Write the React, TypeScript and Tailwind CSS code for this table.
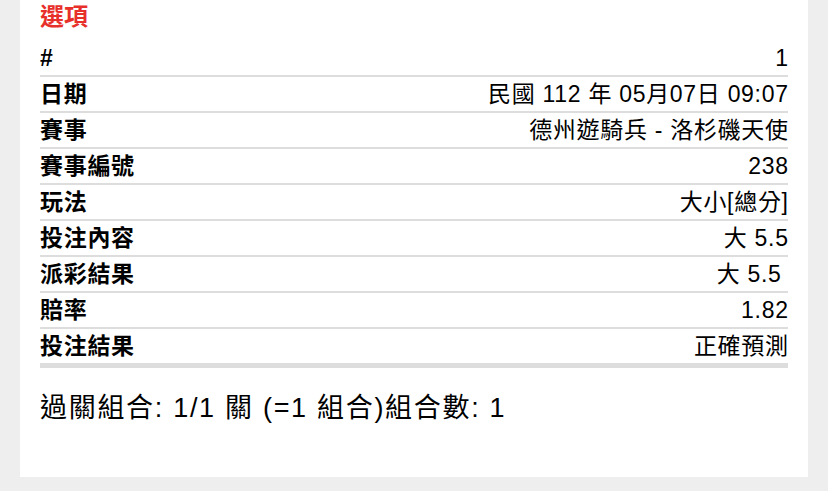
const rows: { label: string; value: string }[] = [
  { label: "#", value: "1" },
  { label: "日期", value: "民國 112 年 05月07日 09:07" },
  { label: "賽事", value: "德州遊騎兵 - 洛杉磯天使" },
  { label: "賽事編號", value: "238" },
  { label: "玩法", value: "大小[總分]" },
  { label: "投注內容", value: "大 5.5" },
  { label: "派彩結果", value: "大 5.5\u00a0" },
  { label: "賠率", value: "1.82" },
  { label: "投注結果", value: "正確預測" },
]

export default function App() {
  return (
    <div className="min-h-[491px] bg-[#eeeeee] font-['Liberation_Sans','Noto_Sans_CJK_TC',sans-serif] text-black">
      <div className="mx-[20px] bg-white px-[20px] pb-[51px]">
        <h2 className="mb-[7px] text-[24px] font-bold leading-[34px] text-[#e8302a]">選項</h2>

        <div className="border-b-[5px] border-[#dddddd]">
          {rows.map((row, i) => (
            <div
              key={row.label}
              className={`flex items-center justify-between text-[23px] leading-[34px] tracking-[0.7px] ${
                i < rows.length - 1 ? "border-b-2 border-[#dddddd]" : ""
              }`}
            >
              <span className="font-bold">{row.label}</span>
              <span className="-mr-[0.7px] whitespace-pre">{row.value}</span>
            </div>
          ))}
        </div>

        <p className="mt-[22px] text-[27px] leading-[36px] tracking-[1.7px]">過關組合: 1/1 關 (=1 組合)組合數: 1</p>
      </div>
    </div>
  )
}
